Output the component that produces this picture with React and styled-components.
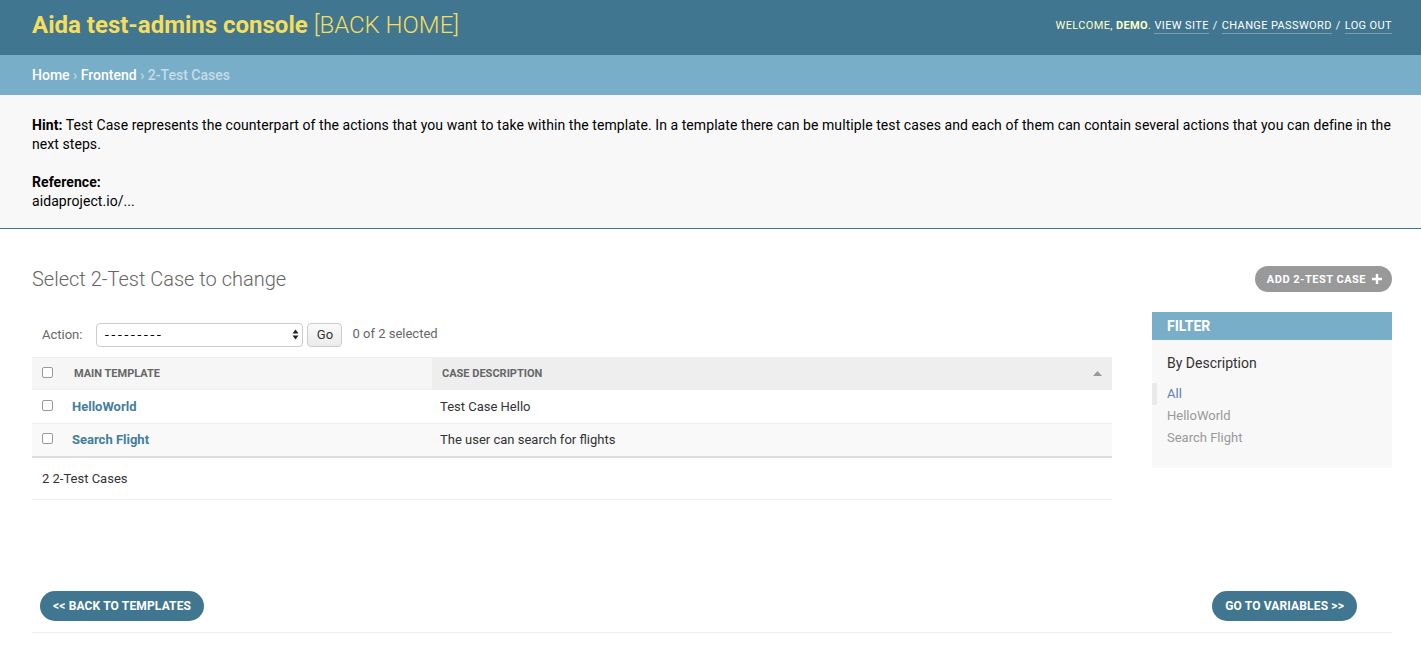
import React from "react";
import styled, { createGlobalStyle } from "styled-components";

const Global = createGlobalStyle`
  html, body { margin: 0; padding: 0; background: #fff; }
  body { font-family: Roboto, "Liberation Sans", sans-serif; color: #333; font-size: 14px; }
  * { box-sizing: border-box; }
`;

const Header = styled.header`
  height: 55px;
  background: #417690;
  display: flex;
  align-items: center;
  justify-content: space-between;
  padding: 0 29px 5px 32px;
`;

const Brand = styled.h1`
  margin: 0;
  font-size: 24px;
  font-weight: 700;
  color: #f5dd5d;
  line-height: 1;
  span { font-weight: 300; }
`;

const UserTools = styled.div`
  font-size: 11px;
  letter-spacing: 0.38px;
  text-transform: uppercase;
  color: #ffc;
  strong { font-weight: 700; }
`;

const ToolLink = styled.a`
  color: #fff;
  text-decoration: none;
  border-bottom: 1px solid rgba(255, 255, 255, 0.3);
  padding-bottom: 1px;
`;

const Sep = styled.span`
  color: #fff;
  margin: 0 4px;
`;

const Breadcrumbs = styled.nav`
  height: 40px;
  background: #79aec8;
  display: flex;
  align-items: center;
  padding: 0 32px;
  font-size: 14px;
  font-weight: 500;
  color: #c4dce8;
  a { color: #fff; text-decoration: none; }
`;

const Hint = styled.section`
  background: #f8f8f8;
  border-bottom: 1px solid #417690;
  padding: 21px 29px 18px 32px;
  color: #000;
  font-size: 14px;
  line-height: 18.5px;
  letter-spacing: 0.07px;
  p { margin: 0; }
  p + p { margin-top: 20px; }
  b { font-weight: 700; }
`;

const Content = styled.main`
  padding: 37px 29px 0 32px;
`;

const TitleRow = styled.div`
  display: flex;
  align-items: center;
  justify-content: space-between;
  height: 26px;
`;

const PageTitle = styled.h1`
  margin: 0;
  font-size: 20px;
  font-weight: 300;
  color: #666;
`;

const AddButton = styled.a`
  display: inline-flex;
  align-items: center;
  gap: 6px;
  height: 26px;
  padding: 0 10px 0 12px;
  border-radius: 13px;
  background: #999;
  color: #fff;
  font-size: 11px;
  font-weight: 700;
  letter-spacing: 0.5px;
  text-transform: uppercase;
  text-decoration: none;
`;

const Main = styled.div`
  display: flex;
  gap: 40px;
  margin-top: 20px;
  align-items: flex-start;
`;

const ListColumn = styled.div`
  flex: 1;
  min-width: 0;
`;

const Actions = styled.div`
  height: 45px;
  display: flex;
  align-items: center;
  padding: 0 10px;
  font-size: 13px;
  color: #666;
`;

const ActionLabel = styled.span`
  margin-right: 14px;
`;

const SelectBox = styled.div`
  width: 207px;
  height: 24px;
  border: 1px solid #ccc;
  border-radius: 4px;
  background: #fff;
  display: flex;
  align-items: center;
  justify-content: space-between;
  padding: 0 3px 0 7px;
  color: #000;
  font-size: 13px;
  span {
    font-family: "DejaVu Sans", sans-serif;
    letter-spacing: 1.8px;
  }
`;

const GoButton = styled.button`
  margin-left: 4px;
  height: 24px;
  width: 35px;
  border: 1px solid #ccc;
  border-radius: 4px;
  background: linear-gradient(#fafafa, #ebebeb);
  font-family: inherit;
  font-size: 13px;
  color: #333;
  padding: 0;
`;

const Counter = styled.span`
  margin-left: 10px;
  position: relative;
  top: -1px;
`;

const Table = styled.table`
  width: 100%;
  border-collapse: collapse;
  font-size: 13px;
`;

const HeadCell = styled.th`
  height: 32px;
  background: ${(p) => (p.$sorted ? "#eee" : "#f6f6f6")};
  border-top: 1px solid #eee;
  border-bottom: 1px solid #eee;
  text-align: left;
  font-size: 11px;
  font-weight: 700;
  text-transform: uppercase;
  color: #666;
  padding: 0 10px 0 ${(p) => p.$pl || "10px"};
  width: ${(p) => p.$w || "auto"};
  vertical-align: middle;
`;

const HeadInner = styled.div`
  display: flex;
  align-items: center;
  justify-content: space-between;
`;

const Row = styled.tr`
  background: ${(p) => (p.$alt ? "#f9f9f9" : "#fff")};
  border-bottom: 1px solid ${(p) => (p.$last ? "#ddd" : "#eee")};
`;

const Cell = styled.td`
  height: 33.5px;
  padding: 0 10px 0 ${(p) => p.$pl || "10px"};
  vertical-align: middle;
  color: #333;
  ${(p) => p.$check && "padding-right: 0; width: 30px;"}
`;

const RowLink = styled.a`
  color: #447e9b;
  font-weight: 700;
  text-decoration: none;
`;

const Check = styled.span`
  display: inline-block;
  width: 11px;
  height: 11px;
  border: 1px solid #999;
  border-radius: 2px;
  background: #fff;
  vertical-align: middle;
  position: relative;
  top: -2px;
`;

const Paginator = styled.div`
  border-top: 1px solid #ddd;
  border-bottom: 1px solid #eee;
  height: 43px;
  display: flex;
  align-items: center;
  padding: 0 10px;
  font-size: 13px;
  color: #333;
`;

const Filter = styled.aside`
  width: 240px;
  flex: none;
  background: #f8f8f8;
  padding-bottom: 19px;
`;

const FilterTitle = styled.h2`
  margin: 0;
  height: 28px;
  display: flex;
  align-items: center;
  padding: 0 15px;
  background: #79aec8;
  color: #fff;
  font-size: 14px;
  font-weight: 700;
`;

const FilterHeading = styled.h3`
  margin: 15px 0 12px;
  padding: 0 15px;
  font-size: 14px;
  font-weight: 400;
  color: #333;
`;

const FilterList = styled.ul`
  list-style: none;
  margin: 0;
  padding: 0;
`;

const FilterItem = styled.li`
  font-size: 13px;
  line-height: 22px;
  padding-left: ${(p) => (p.$selected ? "10px" : "15px")};
  border-left: ${(p) => (p.$selected ? "5px solid #eaeaea" : "none")};
  color: ${(p) => (p.$selected ? "#5b80b2" : "#999")};
`;

const Footer = styled.div`
  margin-top: 91px;
  display: flex;
  justify-content: space-between;
  padding: 0 35px 11px 8px;
  border-bottom: 1px solid #eee;
`;

const NavButton = styled.a`
  display: inline-flex;
  align-items: center;
  height: 30px;
  padding: 0 13px;
  border-radius: 15px;
  background: #417690;
  color: #fff;
  font-size: 12px;
  font-weight: 700;
  letter-spacing: 0.15px;
  text-transform: uppercase;
  text-decoration: none;
`;

const SelectArrows = () => (
  <svg width="7" height="11" viewBox="0 0 7 11">
    <path d="M3.5 0.5 L6.5 4.5 H0.5 Z M3.5 10.5 L6.5 6.5 H0.5 Z" fill="#222" />
  </svg>
);

const PlusIcon = () => (
  <svg width="10" height="10" viewBox="0 0 10 10">
    <path d="M3.8 0 H6.2 V3.8 H10 V6.2 H6.2 V10 H3.8 V6.2 H0 V3.8 H3.8 Z" fill="#fff" />
  </svg>
);

const SortUp = () => (
  <svg width="9" height="5" viewBox="0 0 9 5">
    <path d="M4.5 0 L9 5 H0 Z" fill="#999" />
  </svg>
);

const rows = [
  { name: "HelloWorld", desc: "Test Case Hello" },
  { name: "Search Flight", desc: "The user can search for flights" },
];

export default function App() {
  return (
    <>
      <Global />
      <Header>
        <Brand>
          Aida test-admins console <span>[BACK HOME]</span>
        </Brand>
        <UserTools>
          Welcome, <strong>demo</strong>. <ToolLink href="#">View site</ToolLink>
          <Sep>/</Sep>
          <ToolLink href="#">Change password</ToolLink>
          <Sep>/</Sep>
          <ToolLink href="#">Log out</ToolLink>
        </UserTools>
      </Header>
      <Breadcrumbs>
        <a href="#">Home</a>&nbsp;›&nbsp;<a href="#">Frontend</a>&nbsp;›&nbsp;2-Test Cases
      </Breadcrumbs>
      <Hint>
        <p>
          <b>Hint:</b> Test Case represents the counterpart of the actions that you want to take within the
          template. In a template there can be multiple test cases and each of them can contain several actions
          that you can define in the next steps.
        </p>
        <p>
          <b>Reference:</b>
          <br />
          aidaproject.io/...
        </p>
      </Hint>
      <Content>
        <TitleRow>
          <PageTitle>Select 2-Test Case to change</PageTitle>
          <AddButton href="#">
            Add 2-Test Case <PlusIcon />
          </AddButton>
        </TitleRow>
        <Main>
          <ListColumn>
            <Actions>
              <ActionLabel>Action:</ActionLabel>
              <SelectBox>
                <span>---------</span>
                <SelectArrows />
              </SelectBox>
              <GoButton>Go</GoButton>
              <Counter>0 of 2 selected</Counter>
            </Actions>
            <Table>
              <thead>
                <tr>
                  <HeadCell $w="30px" style={{ paddingRight: 0 }}>
                    <Check />
                  </HeadCell>
                  <HeadCell $w="370px" $pl="12px">Main template</HeadCell>
                  <HeadCell $sorted>
                    <HeadInner>
                      <span>Case description</span>
                      <SortUp />
                    </HeadInner>
                  </HeadCell>
                </tr>
              </thead>
              <tbody>
                {rows.map((r, i) => (
                  <Row key={r.name} $alt={i % 2 === 1} $last={i === rows.length - 1}>
                    <Cell $check>
                      <Check />
                    </Cell>
                    <Cell>
                      <RowLink href="#">{r.name}</RowLink>
                    </Cell>
                    <Cell $pl="8px">{r.desc}</Cell>
                  </Row>
                ))}
              </tbody>
            </Table>
            <Paginator>2 2-Test Cases</Paginator>
          </ListColumn>
          <Filter>
            <FilterTitle>FILTER</FilterTitle>
            <FilterHeading>By Description</FilterHeading>
            <FilterList>
              <FilterItem $selected>All</FilterItem>
              <FilterItem>HelloWorld</FilterItem>
              <FilterItem>Search Flight</FilterItem>
            </FilterList>
          </Filter>
        </Main>
        <Footer>
          <NavButton href="#">&lt;&lt; Back to templates</NavButton>
          <NavButton href="#">Go to variables &gt;&gt;</NavButton>
        </Footer>
      </Content>
    </>
  );
}
